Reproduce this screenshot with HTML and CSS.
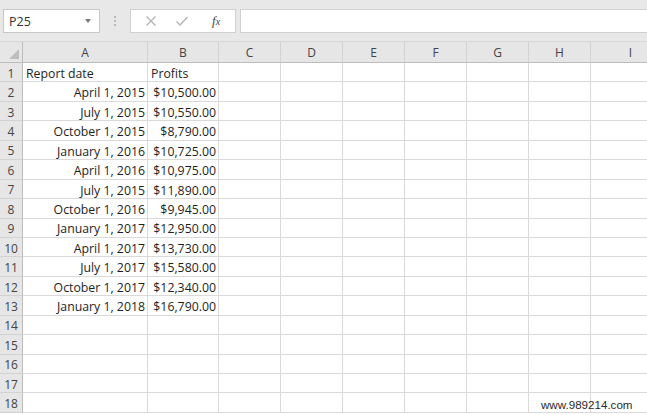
FILE: index.html
```html
<!DOCTYPE html>
<html>
<head>
<meta charset="utf-8">
<link rel="stylesheet" href="styles.css">
</head>
<body>
<div class="toolbar">
  <div class="namebox"><span class="ref">P25</span><span class="caret"></span></div>
  <div class="grip"><span></span><span></span><span></span></div>
  <div class="fxbox">
    <svg class="ico" width="12" height="12" viewBox="0 0 12 12"><path d="M1.5 1.5L10.5 10.5M10.5 1.5L1.5 10.5" stroke="#b3b3b3" stroke-width="1.3" fill="none"/></svg>
    <svg class="ico" width="14" height="12" viewBox="0 0 14 12"><path d="M1.5 6.5L5 10L12.5 2" stroke="#b3b3b3" stroke-width="1.4" fill="none"/></svg>
    <span class="fx"><i>f</i><i class="x">x</i></span>
  </div>
  <div class="formula"></div>
</div>
<div class="sheet" id="sheet">
  <div class="corner"><svg width="10" height="10" viewBox="0 0 10 10"><path d="M10 0L10 10L0 10Z" fill="#bdbdbd"/></svg></div>
  <div class="ch">A</div><div class="ch">B</div><div class="ch">C</div><div class="ch">D</div><div class="ch">E</div><div class="ch">F</div><div class="ch">G</div><div class="ch">H</div><div class="ch">I</div>
</div>
<div class="watermark">www.989214.com</div>
<script src="app.js"></script>
</body>
</html>
```
FILE: app.js
```js
const data = [
  ["Report date", "Profits", true],
  ["April 1, 2015", "$10,500.00"],
  ["July 1, 2015", "$10,550.00"],
  ["October 1, 2015", "$8,790.00"],
  ["January 1, 2016", "$10,725.00"],
  ["April 1, 2016", "$10,975.00"],
  ["July 1, 2015", "$11,890.00"],
  ["October 1, 2016", "$9,945.00"],
  ["January 1, 2017", "$12,950.00"],
  ["April 1, 2017", "$13,730.00"],
  ["July 1, 2017", "$15,580.00"],
  ["October 1, 2017", "$12,340.00"],
  ["January 1, 2018", "$16,790.00"]
];
const sheet = document.getElementById('sheet');
for (let r = 1; r <= 18; r++) {
  const rh = document.createElement('div');
  rh.className = 'rh';
  rh.textContent = r;
  sheet.appendChild(rh);
  const row = data[r - 1];
  for (let c = 0; c < 9; c++) {
    const cell = document.createElement('div');
    cell.className = 'cell';
    if (row && c < 2) {
      cell.textContent = row[c];
      cell.classList.add(row[2] ? 'left' : 'right');
    }
    sheet.appendChild(cell);
  }
}
```
FILE: styles.css
```css
* { box-sizing: border-box; }
html, body { margin: 0; padding: 0; }
body {
  width: 647px;
  height: 415px;
  overflow: hidden;
  background: #fff;
  font-family: "Open Sans", "Noto Sans", sans-serif;
  position: relative;
}
.toolbar {
  height: 42px;
  background: #e8e8e8;
  border-bottom: 1px solid #d6d6d6;
  display: flex;
  align-items: flex-start;
  padding: 9px 0 0 3px;
}
.namebox {
  width: 97px;
  height: 24px;
  background: #fff;
  border: 1px solid #c8c8c8;
  display: flex;
  align-items: center;
  justify-content: space-between;
  padding: 0 8px 0 5px;
  font-size: 12.5px;
  color: #333;
}
.caret {
  width: 0; height: 0;
  border-left: 3.5px solid transparent;
  border-right: 3.5px solid transparent;
  border-top: 4px solid #777;
}
.grip {
  width: 30px;
  height: 24px;
  display: flex;
  flex-direction: column;
  align-items: center;
  justify-content: center;
  gap: 2px;
}
.grip span { width: 2px; height: 2px; background: #a8a8a8; border-radius: 1px; }
.fxbox {
  width: 106px;
  height: 24px;
  background: #fff;
  border: 1px solid #d0d0d0;
  display: flex;
  align-items: center;
  padding-left: 14px;
  gap: 18px;
}
.fx {
  font-family: "Liberation Serif", serif;
  font-size: 13px;
  color: #444;
  margin-left: 5px;
}
.fx .x { font-size: 10px; }
.formula {
  flex: 1;
  height: 24px;
  margin-left: 4px;
  background: #fff;
  border: 1px solid #d0d0d0;
  border-right: none;
}
.sheet {
  display: grid;
  grid-template-columns: 23px 125px 71px 62px 62px 62px 62px 62px 62px 80px;
  grid-template-rows: 21px;
  grid-auto-rows: 19.45px;
}
.corner {
  background: #e6e6e6;
  border-right: 1px solid #bcbcbc;
  border-bottom: 1px solid #bcbcbc;
  display: flex;
  align-items: flex-end;
  justify-content: flex-end;
  padding: 0 3px 3px 0;
}
.corner svg { display: block; }
.ch {
  background: #e6e6e6;
  border-right: 1px solid #d2d2d2;
  border-bottom: 1px solid #bcbcbc;
  font-size: 12px;
  color: #444;
  display: flex;
  align-items: center;
  justify-content: center;
  padding-top: 1px;
}
.rh {
  background: #e6e6e6;
  border-right: 1px solid #bcbcbc;
  border-bottom: 1px solid #d2d2d2;
  font-size: 12px;
  color: #444;
  display: flex;
  align-items: center;
  justify-content: center;
  padding-top: 2px;
}
.cell {
  border-right: 1px solid #dadada;
  border-bottom: 1px solid #dadada;
  font-size: 12.3px;
  color: #1e1e1e;
  display: flex;
  align-items: flex-end;
  padding: 0 2px 0 3px;
  white-space: nowrap;
  line-height: 15.5px;
}
.cell.right { justify-content: flex-end; }
.cell.left { justify-content: flex-start; }
.watermark {
  position: absolute;
  left: 541px;
  top: 398px;
  font-family: "Liberation Sans", Arial, sans-serif;
  font-size: 11.6px;
  color: #2a2a2a;
}
```
